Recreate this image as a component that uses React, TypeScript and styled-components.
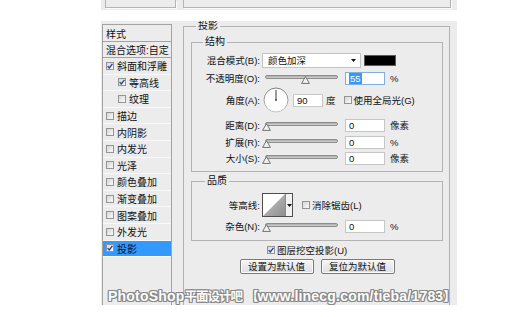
import styled, { createGlobalStyle } from 'styled-components';

const GlobalStyle = createGlobalStyle`
  html, body { margin: 0; padding: 0; background: #fff; }
  body {
    font-family: "Liberation Sans", "Noto Sans CJK SC", sans-serif;
    font-size: 10px;
    color: #111;
  }
  * { box-sizing: border-box; }
`;

const Page = styled.div`
  width: 516px;
  height: 317px;
  padding-left: 101px;
  overflow: hidden;
`;

const TopStrip = styled.div`
  width: 356px;
  height: 10px;
  padding-left: 4px;
  display: flex;
  align-items: flex-start;
  gap: 7px;
  background: #ececec;
`;

const TopBox = styled.div<{ $w: number }>`
  width: ${({ $w }) => $w}px;
  height: 8px;
  border: 1px solid #b4b4b4;
  border-top: none;
  box-shadow: 1px 1px 0 #fbfbfb;
`;

const Dialog = styled.div`
  position: relative;
  width: 356px;
  height: 284px;
  margin-top: 11px;
  padding-left: 1px;
  display: flex;
  align-items: flex-start;
  background: #ececec;
  overflow: hidden;
`;

/* ---------- left style list ---------- */

const StylePanel = styled.div`
  flex: none;
  width: 70px;
  height: 320px;
  margin-top: 3px;
  border: 1px solid #a3a3a3;
`;

const PanelHead = styled.div<{ $h: number }>`
  height: ${({ $h }) => $h}px;
  padding-left: 3px;
  display: flex;
  align-items: center;
  border-bottom: 1px solid #a3a3a3;
  font-size: 10px;
  white-space: nowrap;
`;

const StyleItem = styled.div<{ $indent: number; $selected?: boolean }>`
  height: 16.6px;
  padding-left: ${({ $indent }) => $indent}px;
  display: flex;
  align-items: center;
  gap: 3px;
  border-bottom: 1px solid #f9f9f9;
  background: ${({ $selected }) => ($selected ? '#3399ff' : 'transparent')};
  font-size: 10px;
  white-space: nowrap;
`;

/* ---------- check box ---------- */

const Box = styled.span`
  flex: none;
  width: 8px;
  height: 8px;
  display: inline-flex;
  align-items: center;
  justify-content: center;
  border: 1px solid #949494;
  background: linear-gradient(135deg, #d6d6d6, #fafafa);
`;

const Check = ({ checked = false }: { checked?: boolean }) => (
  <Box>
    {checked && (
      <svg width="6" height="6" viewBox="0 0 6 6">
        <path d="M0.6 3.1 L2.3 4.9 L5.4 0.8" fill="none" stroke="#1f3f9a" strokeWidth="1.3" />
      </svg>
    )}
  </Box>
);

/* ---------- right side ---------- */

const Group = styled.fieldset<{ $w: number; $mt?: number; $h?: number }>`
  flex: none;
  width: ${({ $w }) => $w}px;
  ${({ $h }) => ($h ? `height: ${$h}px;` : '')}
  margin: ${({ $mt = 0 }) => $mt}px 0 0;
  padding: 0;
  min-width: 0;
  border: 1px solid #b2b2b2;
`;

const Outer = styled(Group)`
  margin-left: 11px;
  padding: 8px 6px 0 7px;
`;

const Legend = styled.legend<{ $ml: number }>`
  margin-left: ${({ $ml }) => $ml}px;
  padding: 0 2px;
  font-size: 10px;
  line-height: 8px;
`;

const Row = styled.div<{ $h: number; $mt?: number; $pl?: number; $center?: boolean }>`
  height: ${({ $h }) => $h}px;
  margin-top: ${({ $mt = 0 }) => $mt}px;
  padding-left: ${({ $pl = 0 }) => $pl}px;
  display: flex;
  align-items: center;
  justify-content: ${({ $center }) => ($center ? 'center' : 'flex-start')};
  font-size: 9.5px;
  white-space: nowrap;
`;

const Label = styled.span`
  flex: none;
  width: 68px;
  text-align: right;
`;

const Select = styled.div`
  width: 99px;
  height: 15px;
  margin-left: 2px;
  padding: 0 4px 0 5px;
  display: flex;
  align-items: center;
  justify-content: space-between;
  background: #fff;
  border: 1px solid #c3c3c3;
`;

const Swatch = styled.div`
  width: 32px;
  height: 11px;
  margin-left: 3px;
  background: #000;
  border: 1px solid #5a5a5a;
`;

const SliderWrap = styled.div`
  position: relative;
  flex: none;
  width: 78px;
  height: 16px;
  margin-left: 2px;
`;

const Track = styled.div`
  margin: 5px 2px 0 3px;
  height: 4px;
  border-radius: 2px;
  border: 1px solid #8d8d8d;
  background: linear-gradient(#a8a8a8, #d6d6d6);
`;

const Thumb = styled.svg`
  position: absolute;
  top: 6px;
`;

const Slider = ({ value }: { value: number }) => (
  <SliderWrap>
    <Track />
    <Thumb width="9" height="8" viewBox="0 0 9 8" style={{ left: (value / 100) * 70 }}>
      <polygon points="4.5,0.6 8.4,7.4 0.6,7.4" fill="#f3f3f3" stroke="#707070" strokeWidth="1" />
    </Thumb>
  </SliderWrap>
);

const Field = styled.div<{ $w: number; $ml: number; $focus?: boolean }>`
  flex: none;
  width: ${({ $w }) => $w}px;
  height: 13px;
  margin-left: ${({ $ml }) => $ml}px;
  padding-left: 3px;
  display: flex;
  align-items: center;
  background: #fff;
  border: 1px solid ${({ $focus }) => ($focus ? '#7fb0e0' : '#c6c6c6')};
  font-size: 9.5px;
`;

const Picked = styled.span`
  padding: 0 1px;
  background: #3399ff;
  color: #fff;
`;

const Unit = styled.span<{ $ml?: number }>`
  margin-left: ${({ $ml = 5 }) => $ml}px;
  color: #222;
`;

const Dial = () => (
  <svg width="26" height="26" viewBox="0 0 26 26" style={{ marginLeft: 3, flex: 'none' }}>
    <defs>
      <linearGradient id="dialRim" x1="0" y1="0" x2="0" y2="1">
        <stop offset="0" stopColor="#7c7c7c" />
        <stop offset="1" stopColor="#c4c4c4" />
      </linearGradient>
    </defs>
    <circle cx="13" cy="13" r="12" fill="#fdfdfd" stroke="url(#dialRim)" strokeWidth="1" />
    <line x1="13" y1="13" x2="13" y2="3" stroke="#3a3a3a" strokeWidth="1" />
    <circle cx="13" cy="13" r="0.9" fill="#3a3a3a" />
  </svg>
);

const Contour = styled.div`
  flex: none;
  width: 31px;
  height: 24px;
  margin-left: 2px;
  display: flex;
  border: 1px solid #4f4f4f;
  background: #fff;
`;

const ContourDrop = styled.div`
  width: 7px;
  display: flex;
  align-items: center;
  justify-content: center;
  border-left: 1px solid #8a8a8a;
  background: #f2f2f2;
`;

const Arrow = () => (
  <svg width="5" height="3" viewBox="0 0 5 3">
    <polygon points="0,0 5,0 2.5,3" fill="#111" />
  </svg>
);

const CheckLabel = styled.span<{ $ml: number }>`
  display: inline-flex;
  align-items: center;
  gap: 2px;
  margin-left: ${({ $ml }) => $ml}px;
`;

const Button = styled.div`
  width: 74px;
  height: 15px;
  display: flex;
  align-items: center;
  justify-content: center;
  border: 1px solid #7a7a7a;
  border-radius: 2px;
  background: linear-gradient(#f6f6f6, #dedede);
  box-shadow: inset 0 0 0 1px #fbfbfb;
  font-size: 9.5px;
`;

const Watermark = styled.div`
  position: absolute;
  left: 7px;
  bottom: 0;
  font-family: "Liberation Sans", "Noto Sans CJK SC", sans-serif;
  font-weight: bold;
  font-size: 14px;
  line-height: 15px;
  letter-spacing: 0.2px;
  color: #fcfcfc;
  white-space: nowrap;
  text-shadow:
    -1px -1px 0 #888, 1px -1px 0 #888, -1px 1px 0 #888, 1px 1px 0 #888,
    0 -1px 0 #888, 0 1px 0 #888, -1px 0 0 #888, 1px 0 0 #888;

  & > span {
    font-size: 12.5px;
    letter-spacing: -1px;
  }
`;

const styleItems = [
  { label: '斜面和浮雕', checked: true, indent: 3 },
  { label: '等高线', checked: true, indent: 15 },
  { label: '纹理', checked: false, indent: 15 },
  { label: '描边', checked: false, indent: 3 },
  { label: '内阴影', checked: false, indent: 3 },
  { label: '内发光', checked: false, indent: 3 },
  { label: '光泽', checked: false, indent: 3 },
  { label: '颜色叠加', checked: false, indent: 3 },
  { label: '渐变叠加', checked: false, indent: 3 },
  { label: '图案叠加', checked: false, indent: 3 },
  { label: '外发光', checked: false, indent: 3 },
  { label: '投影', checked: true, indent: 3, selected: true },
];

export default function App() {
  return (
    <Page>
      <GlobalStyle />
      <TopStrip>
        <TopBox $w={71} />
        <TopBox $w={268} />
      </TopStrip>

      <Dialog>
        <StylePanel>
          <PanelHead $h={17}>样式</PanelHead>
          <PanelHead $h={16}>混合选项:自定</PanelHead>
          {styleItems.map((it) => (
            <StyleItem key={it.label} $indent={it.indent} $selected={it.selected}>
              <Check checked={it.checked} />
              {it.label}
            </StyleItem>
          ))}
        </StylePanel>

        <Outer $w={267} $h={320} $mt={1}>
          <Legend $ml={5}>投影</Legend>

          <Group $w={252}>
            <Legend $ml={11}>结构</Legend>
            <Row $h={16} $mt={6}>
              <Label>混合模式(B):</Label>
              <Select>
                颜色加深
                <Arrow />
              </Select>
              <Swatch />
            </Row>
            <Row $h={16} $mt={2}>
              <Label>不透明度(O):</Label>
              <Slider value={55} />
              <Field $w={40} $ml={5} $focus>
                <Picked>55</Picked>
              </Field>
              <Unit>%</Unit>
            </Row>
            <Row $h={26} $mt={1}>
              <Label>角度(A):</Label>
              <Dial />
              <Field $w={30} $ml={4}>90</Field>
              <Unit $ml={3}>度</Unit>
              <CheckLabel $ml={8}>
                <Check />
                使用全局光(G)
              </CheckLabel>
            </Row>
            <Row $h={16} $mt={4}>
              <Label>距离(D):</Label>
              <Slider value={0} />
              <Field $w={40} $ml={5}>0</Field>
              <Unit>像素</Unit>
            </Row>
            <Row $h={16} $mt={1}>
              <Label>扩展(R):</Label>
              <Slider value={0} />
              <Field $w={40} $ml={5}>0</Field>
              <Unit>%</Unit>
            </Row>
            <Row $h={16}>
              <Label>大小(S):</Label>
              <Slider value={0} />
              <Field $w={40} $ml={5}>0</Field>
              <Unit>像素</Unit>
            </Row>
            <Row $h={5} />
          </Group>

          <Group $w={252} $mt={5}>
            <Legend $ml={13}>品质</Legend>
            <Row $h={24} $mt={8}>
              <Label>等高线:</Label>
              <Contour>
                <svg width="22" height="22" viewBox="0 0 22 22">
                  <defs>
                    <linearGradient id="contourFill" x1="0" y1="0" x2="1" y2="1">
                      <stop offset="0" stopColor="#c9c9c9" />
                      <stop offset="1" stopColor="#8e8e8e" />
                    </linearGradient>
                  </defs>
                  <polygon points="0,22 22,0 22,22" fill="url(#contourFill)" />
                </svg>
                <ContourDrop>
                  <Arrow />
                </ContourDrop>
              </Contour>
              <CheckLabel $ml={9}>
                <Check />
                消除锯齿(L)
              </CheckLabel>
            </Row>
            <Row $h={16} $mt={1}>
              <Label>杂色(N):</Label>
              <Slider value={0} />
              <Field $w={40} $ml={5}>0</Field>
              <Unit>%</Unit>
            </Row>
            <Row $h={6} />
          </Group>

          <Row $h={14} $mt={2} $pl={76}>
            <CheckLabel $ml={0}>
              <Check checked />
              图层挖空投影(U)
            </CheckLabel>
          </Row>
          <Row $h={16} $mt={1} $center>
            <Button>设置为默认值</Button>
            <Button style={{ marginLeft: 7 }}>复位为默认值</Button>
          </Row>
        </Outer>

        <Watermark>
          PhotoShop<span>平面设计吧</span> <span>【</span>www.linecg.com/tieba/1783<span>】</span>
        </Watermark>
      </Dialog>
    </Page>
  );
}
